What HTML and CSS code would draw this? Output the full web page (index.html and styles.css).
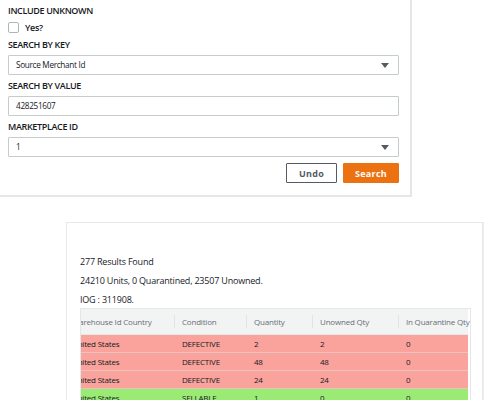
FILE: index.html
```html
<!DOCTYPE html>
<html lang="en">
<head>
    <meta charset="UTF-8">
    <title>Inventory Search</title>
    <link rel="stylesheet" href="styles.css">
</head>
<body>
    <!-- search form -->
    <div class="search-panel">
        <div class="form-group">
            <label class="field-label">INCLUDE UNKNOWN</label>
            <label class="check-row"><span class="checkbox"></span>Yes?</label>
        </div>
        <div class="form-group">
            <label class="field-label">SEARCH BY KEY</label>
            <div class="field select">Source Merchant Id<span class="caret"></span></div>
        </div>
        <div class="form-group">
            <label class="field-label">SEARCH BY VALUE</label>
            <div class="field">428251607</div>
        </div>
        <div class="form-group">
            <label class="field-label">MARKETPLACE ID</label>
            <div class="field select">1<span class="caret"></span></div>
        </div>
        <div class="form-actions">
            <button class="undo-btn">Undo</button>
            <button class="search-btn">Search</button>
        </div>
    </div>

    <!-- results -->
    <div class="results-panel">
        <p class="summary">277 Results Found</p>
        <p class="summary">24210 Units, 0 Quarantined, 23507 Unowned.</p>
        <p class="summary">IOG : 311908.</p>
        <div class="table-wrap">
            <table class="results-table">
                <thead>
                    <tr>
                        <th class="col-country">Warehouse Id Country</th>
                        <th class="col-cond">Condition</th>
                        <th class="col-qty">Quantity</th>
                        <th class="col-unowned">Unowned Qty</th>
                        <th class="col-quar">In Quarantine Qty</th>
                    </tr>
                </thead>
                <tbody>
                    <tr class="defective"><td>United States</td><td>DEFECTIVE</td><td>2</td><td>2</td><td>0</td></tr>
                    <tr class="defective"><td>United States</td><td>DEFECTIVE</td><td>48</td><td>48</td><td>0</td></tr>
                    <tr class="defective"><td>United States</td><td>DEFECTIVE</td><td>24</td><td>24</td><td>0</td></tr>
                    <tr class="sellable"><td>United States</td><td>SELLABLE</td><td>1</td><td>0</td><td>0</td></tr>
                </tbody>
            </table>
        </div>
    </div>
</body>
</html>
```

FILE: styles.css
```css
body {
    margin: 0;
    font-family: 'Open Sans', 'Noto Sans', sans-serif;
    font-size: 9px;
    letter-spacing: -0.2px;
    color: #16191f;
    background: #fff;
    overflow: hidden;
}

/* search form */
.search-panel {
    width: 391px;
    padding: 4px 11px 12px 8px;
    border-right: 2px solid #e4e7e7;
    border-bottom: 2px solid #e4e7e7;
}

.form-group {
    margin-bottom: 4px;
}

.field-label {
    display: block;
    font-size: 9px;
    font-weight: 600;
    letter-spacing: -0.35px;
    line-height: 14px;
    margin-bottom: 3px;
    color: #16191f;
}

.search-panel .form-group:first-child .field-label {
    margin-bottom: 2px;
}

.check-row {
    display: flex;
    align-items: center;
    gap: 6px;
    height: 14px;
    margin-bottom: 4px;
    font-weight: 600;
    letter-spacing: -0.3px;
}

.checkbox {
    width: 9px;
    height: 9px;
    border: 1px solid #aab7b8;
    border-radius: 2px;
}

.field {
    height: 18px;
    line-height: 18px;
    border: 1px solid #c5cccc;
    border-radius: 1px;
    padding: 0 8px 0 7px;
    font-size: 8.2px;
    font-weight: 500;
    letter-spacing: -0.3px;
    display: flex;
    align-items: center;
    justify-content: space-between;
}

.caret {
    width: 0;
    height: 0;
    border-left: 4px solid transparent;
    border-right: 4px solid transparent;
    border-top: 5px solid #545b64;
    margin-right: 1px;
}

.form-actions {
    display: flex;
    justify-content: flex-end;
    gap: 6px;
    margin-top: 6px;
}

.form-actions button {
    font-family: inherit;
    font-size: 9px;
    font-weight: 700;
    letter-spacing: 0.3px;
    height: 20px;
    border-radius: 1px;
    padding: 0;
    cursor: pointer;
}

.undo-btn {
    width: 51px;
    background: #fff;
    border: 1px solid #545b64;
    color: #545b64;
}

.search-btn {
    width: 56px;
    background: #ec7211;
    border: 1px solid #ec7211;
    color: #fff;
}

/* results */
.results-panel {
    width: 402px;
    margin: 25px 0 0 66px;
    padding: 32px 0 0 13px;
    border: 1px solid #e6e9e9;
    box-shadow: 1px 0 0 #eceeee;
    height: 200px;
}

.summary {
    margin: 0 0 6px;
    line-height: 13px;
}

.summary:last-of-type {
    margin-bottom: 2px;
}

.table-wrap {
    width: 389px;
    overflow: hidden;
    border: 1px solid #e4e7e7;
    border-bottom: none;
}

.results-table {
    border-collapse: collapse;
    margin-left: -17px;
    width: 404px;
    table-layout: fixed;
    white-space: nowrap;
    font-size: 8px;
    letter-spacing: -0.2px;
}

.results-table th {
    position: relative;
    height: 25px;
    padding: 0 0 0 8px;
    background: #f2f3f3;
    color: #687078;
    font-weight: 400;
    text-align: left;
    border-bottom: 1px solid #e4e7e7;
}

.results-table th + th::before {
    content: "";
    position: absolute;
    left: 0;
    top: 6px;
    bottom: 6px;
    border-left: 1px solid #e1e4e4;
}

.col-country { width: 102px; }
.col-cond { width: 64px; }
.col-qty { width: 58px; }
.col-unowned { width: 78px; }
.col-quar { width: 62px; }

.results-table td {
    height: 17px;
    padding: 0 0 0 8px;
    border-bottom: 1px solid #e8c3bf;
    font-weight: 500;
}

.defective td {
    background: #f9a39c;
}

.sellable td {
    background: #9aeb74;
}
```
